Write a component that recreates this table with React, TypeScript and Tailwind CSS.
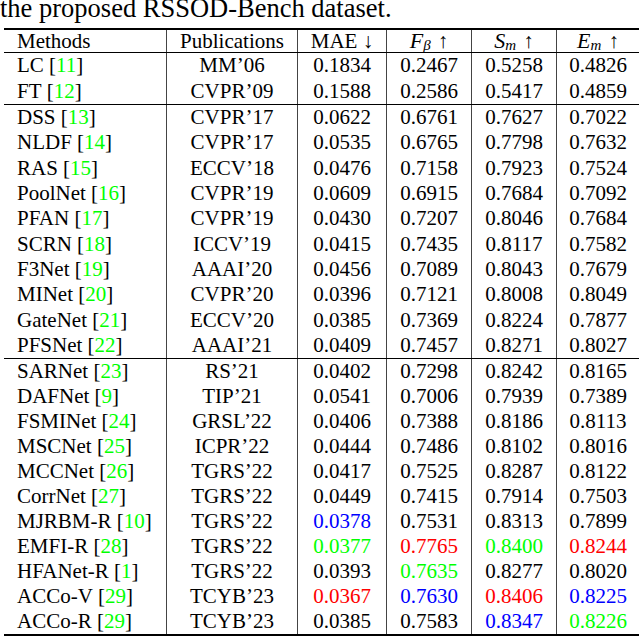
import React from 'react';

type Cell = string | [string, 'r' | 'g' | 'b'];

interface Row {
  name: string;
  cite: string;
  pub: string;
  vals: Cell[];
}

const sections: Row[][] = [
  [
    { name: 'LC', cite: '11', pub: 'MM’06', vals: ['0.1834', '0.2467', '0.5258', '0.4826'] },
    { name: 'FT', cite: '12', pub: 'CVPR’09', vals: ['0.1588', '0.2586', '0.5417', '0.4859'] },
  ],
  [
    { name: 'DSS', cite: '13', pub: 'CVPR’17', vals: ['0.0622', '0.6761', '0.7627', '0.7022'] },
    { name: 'NLDF', cite: '14', pub: 'CVPR’17', vals: ['0.0535', '0.6765', '0.7798', '0.7632'] },
    { name: 'RAS', cite: '15', pub: 'ECCV’18', vals: ['0.0476', '0.7158', '0.7923', '0.7524'] },
    { name: 'PoolNet', cite: '16', pub: 'CVPR’19', vals: ['0.0609', '0.6915', '0.7684', '0.7092'] },
    { name: 'PFAN', cite: '17', pub: 'CVPR’19', vals: ['0.0430', '0.7207', '0.8046', '0.7684'] },
    { name: 'SCRN', cite: '18', pub: 'ICCV’19', vals: ['0.0415', '0.7435', '0.8117', '0.7582'] },
    { name: 'F3Net', cite: '19', pub: 'AAAI’20', vals: ['0.0456', '0.7089', '0.8043', '0.7679'] },
    { name: 'MINet', cite: '20', pub: 'CVPR’20', vals: ['0.0396', '0.7121', '0.8008', '0.8049'] },
    { name: 'GateNet', cite: '21', pub: 'ECCV’20', vals: ['0.0385', '0.7369', '0.8224', '0.7877'] },
    { name: 'PFSNet', cite: '22', pub: 'AAAI’21', vals: ['0.0409', '0.7457', '0.8271', '0.8027'] },
  ],
  [
    { name: 'SARNet', cite: '23', pub: 'RS’21', vals: ['0.0402', '0.7298', '0.8242', '0.8165'] },
    { name: 'DAFNet', cite: '9', pub: 'TIP’21', vals: ['0.0541', '0.7006', '0.7939', '0.7389'] },
    { name: 'FSMINet', cite: '24', pub: 'GRSL’22', vals: ['0.0406', '0.7388', '0.8186', '0.8113'] },
    { name: 'MSCNet', cite: '25', pub: 'ICPR’22', vals: ['0.0444', '0.7486', '0.8102', '0.8016'] },
    { name: 'MCCNet', cite: '26', pub: 'TGRS’22', vals: ['0.0417', '0.7525', '0.8287', '0.8122'] },
    { name: 'CorrNet', cite: '27', pub: 'TGRS’22', vals: ['0.0449', '0.7415', '0.7914', '0.7503'] },
    { name: 'MJRBM-R', cite: '10', pub: 'TGRS’22', vals: [['0.0378', 'b'], '0.7531', '0.8313', '0.7899'] },
    { name: 'EMFI-R', cite: '28', pub: 'TGRS’22', vals: [['0.0377', 'g'], ['0.7765', 'r'], ['0.8400', 'g'], ['0.8244', 'r']] },
    { name: 'HFANet-R', cite: '1', pub: 'TGRS’22', vals: ['0.0393', ['0.7635', 'g'], '0.8277', '0.8020'] },
    { name: 'ACCo-V', cite: '29', pub: 'TCYB’23', vals: [['0.0367', 'r'], ['0.7630', 'b'], ['0.8406', 'r'], ['0.8225', 'b']] },
    { name: 'ACCo-R', cite: '29', pub: 'TCYB’23', vals: ['0.0385', '0.7583', ['0.8347', 'b'], ['0.8226', 'g']] },
  ],
];

const colorClass = { r: 'text-[#ff0000]', g: 'text-[#00ff00]', b: 'text-[#0000ff]' };

const cols = 'grid grid-cols-[163px_131px_89px_85px_85px_82px]';
const vline = 'border-r border-[#444]';

const rowHeights = ['h-[25.5px]', 'h-[25.3px]', 'h-[25px]'];

export default function App() {
  return (
    <div className="w-[640px] h-[640px] overflow-hidden bg-white text-black font-['Liberation_Serif',serif]">
      <div className="h-[28px] overflow-hidden">
        <p className="text-[26.5px] leading-[26.5px] -mt-[5px] whitespace-nowrap">the proposed RSSOD-Bench dataset.</p>
      </div>
      <div className="ml-[4px] w-[635px] border-t-2 border-b-2 border-black text-[21px]">
        <div className={`${cols} h-[23px] border-b border-black leading-none`}>
          <div className={`${vline} flex items-center pl-[13px]`}>Methods</div>
          <div className={`${vline} flex items-center justify-center`}>Publications</div>
          <div className={`${vline} flex items-center justify-center`}>MAE ↓</div>
          <div className={`${vline} flex items-center justify-center`}>
            <span className="italic text-[22px]">F</span>
            <sub className="italic text-[15px] mr-[7px]">β</sub>↑
          </div>
          <div className={`${vline} flex items-center justify-center`}>
            <span className="italic text-[22px]">S</span>
            <sub className="italic text-[15px] mr-[7px]">m</sub>↑
          </div>
          <div className="flex items-center justify-center">
            <span className="italic text-[22px]">E</span>
            <sub className="italic text-[15px] mr-[7px]">m</sub>↑
          </div>
        </div>
        {sections.map((rows, si) => (
          <div key={si} className={si < sections.length - 1 ? 'border-b border-black' : ''}>
            {rows.map((r) => (
              <div key={r.name} className={`${cols} ${rowHeights[si]} leading-none`}>
                <div className={`${vline} flex items-center pl-[13px] whitespace-nowrap`}>
                  {r.name}&nbsp;[<span className="text-[#00ff00]">{r.cite}</span>]
                </div>
                <div className={`${vline} flex items-center justify-center`}>{r.pub}</div>
                {r.vals.map((v, i) => {
                  const text = typeof v === 'string' ? v : v[0];
                  const color = typeof v === 'string' ? '' : colorClass[v[1]];
                  return (
                    <div
                      key={i}
                      className={`${i < 3 ? vline : ''} ${color} flex items-center justify-center`}
                    >
                      {text}
                    </div>
                  );
                })}
              </div>
            ))}
          </div>
        ))}
      </div>
    </div>
  );
}
